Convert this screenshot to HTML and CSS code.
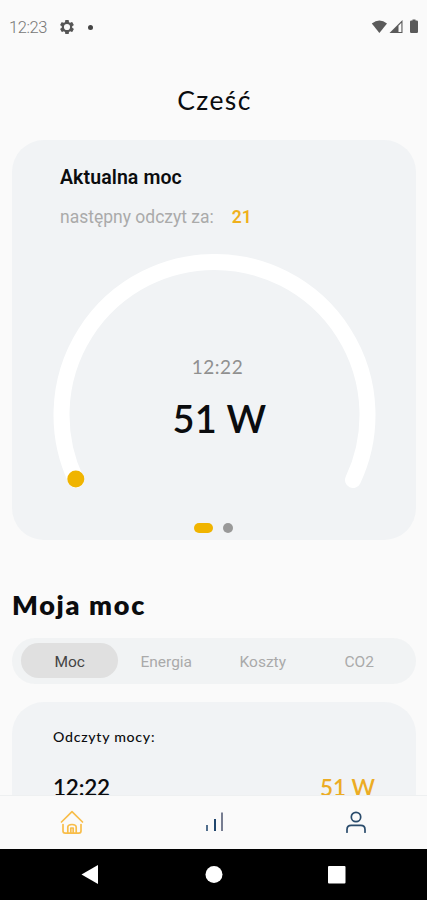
FILE: index.html
```html
<!DOCTYPE html>
<html lang="pl">
<head>
<meta charset="utf-8">
<meta name="viewport" content="width=device-width, initial-scale=1">
<title>Moja moc</title>
<link rel="stylesheet" href="styles.css">
</head>
<body>
<div class="screen">
  <header class="status">
    <span class="clock">12:23</span>
    <svg class="gear" width="14" height="14" viewBox="2 2 20 20"><path fill="#555" fill-rule="evenodd" d="M19.4 13a7.500 7.500 0 0 0 0-2l2.100-1.650a.5.5 0 0 0 .12-.64l-2-3.460a.5.5 0 0 0-.61-.22l-2.490 1a7.300 7.300 0 0 0-1.690-.98l-.38-2.650A.5.5 0 0 0 14 2h-4a.5.5 0 0 0-.49.420l-.38 2.650c-.61.250-1.170.590-1.690.980l-2.490-1a.5.5 0 0 0-.61.220l-2 3.460a.5.5 0 0 0 .12.640L4.570 11a7.900 7.900 0 0 0 0 2l-2.110 1.650a.5.5 0 0 0-.12.640l2 3.460c.12.220.39.300.61.220l2.490-1c.52.400 1.080.730 1.690.980l.38 2.650c.03.240.24.420.49.420h4c.25 0 .46-.18.490-.42l.38-2.650c.61-.25 1.170-.59 1.690-.98l2.490 1c.23.090.49 0 .61-.22l2-3.460a.5.5 0 0 0-.12-.64zM12 16.400a4.400 4.400 0 1 1 0-8.800 4.400 4.400 0 0 1 0 8.800z"/></svg>
    <span class="dot"></span>
    <svg class="signals" width="50" height="16" viewBox="0 0 50 16" fill="#5a5a5a"><path d="M.8 4.500Q8.500-1.300 16 4.500L8.400 14z"/><path d="M18.500 14 31.500 1v13z"/><path fill="#fafafa" d="M27.500 6.700 30.400 3.800v9.100h-2.900z"/><path d="M41.500 1.500V.5h3v1h1.300q1.200 0 1.200 1.200v10.100q0 1.200-1.200 1.200h-5.600q-1.200 0-1.200-1.200V2.700q0-1.200 1.200-1.200z"/></svg>
  </header>
  <h1 class="greeting">Cześć</h1>
  <main class="content">
    <section class="card power">
      <h2 class="card-title">Aktualna moc</h2>
      <p class="next">następny odczyt za: <b>21</b></p>
      <div class="gauge">
        <svg class="arc" width="324" height="250" viewBox="0 0 324 250"><path d="M23 226A153 153 0 1 1 300 226" fill="none" stroke="#fff" stroke-width="16" stroke-linecap="round"/><circle cx="22.800" cy="225" r="8.500" fill="#f0b400"/></svg>
        <div class="reading"><span class="reading-time">12:22</span><strong class="reading-value">51 W</strong></div>
      </div>
      <div class="pager"><i class="page active"></i><i class="page"></i></div>
    </section>
    <h2 class="section-title">Moja moc</h2>
    <nav class="tabs"><span class="tab selected">Moc</span><span class="tab">Energia</span><span class="tab">Koszty</span><span class="tab">CO2</span></nav>
    <section class="card history">
      <p class="history-title">Odczyty mocy:</p>
      <div class="row"><span class="row-time">12:22</span><span class="row-value">51 W</span></div>
    </section>
  </main>
  <nav class="bottom">
    <span><svg width="24" height="26" viewBox="0 0 24 26" fill="none" stroke="#f8bd49" stroke-width="1.700" stroke-linecap="round" stroke-linejoin="round"><path d="M1.500 12 12 1.700 22.500 12M3 14.500V21q0 2.200 2.200 2.200h13.600Q21 23.200 21 21v-6.500M7.800 22.500v-5.200q0-2.800 4.200-2.800t4.200 2.800v5.200M10.800 22.500V18h2.400v4.500"/></svg></span>
    <span><svg width="24" height="26" viewBox="0 0 24 26" fill="none" stroke-width="2"><path stroke="#526f8d" d="M5 15v6"/><path stroke="#20466d" d="M13 9v12"/><path stroke="#777d91" d="M20 2.500V21"/></svg></span>
    <span><svg width="24" height="26" viewBox="0 0 24 26" fill="none" stroke="#294b6b" stroke-width="1.700" stroke-linecap="round"><circle cx="12" cy="7" r="4.700"/><path d="M3 22.200v-2.700q0-4.200 4.200-4.200h9.600q4.200 0 4.200 4.200v2.700"/></svg></span>
  </nav>
  <footer class="system">
    <svg width="427" height="51" viewBox="0 0 427 51" fill="#fff"><path d="M81.500 25.500 98 16v19z"/><circle cx="214" cy="25.500" r="8.500"/><rect x="328" y="17" width="17.500" height="17.500" rx="1"/></svg>
  </footer>
</div>
</body>
</html>
```
FILE: styles.css
```css
* { box-sizing: border-box; }
body { margin: 0; background: #fafafa; font-family: Roboto, sans-serif; color: #0b0c0e; }
h1, h2, p { margin: 0; }
svg { display: block; }
.screen { height: 900px; display: flex; flex-direction: column; overflow: hidden; }
.status { height: 54px; flex: none; display: flex; align-items: center; padding: 0 6px 0 9px; }
.clock { font-size: 16.5px; line-height: 20px; color: #777; font-weight: 300; letter-spacing: -.4px; width: 51px; padding-top: 2px; }
.dot { width: 5px; height: 5px; border-radius: 50%; background: #444; margin-left: 14px; }
.signals { margin-left: auto; }
.greeting { height: 86px; flex: none; font: 400 26.500px/36px Lato, sans-serif; padding: 28px 0 0 2px; text-align: center; letter-spacing: 1.4px; }
.content { flex: 1; min-height: 0; overflow: hidden; padding: 0 11px 0 12px; }
.card { background: #f1f3f5; border-radius: 32px; }
.power { height: 400px; padding: 26px 41px 0; display: flex; flex-direction: column; }
.card-title { font-size: 19.500px; line-height: 24px; font-weight: 600; padding-left: 7px; letter-spacing: .1px; }
.next { font-size: 17.500px; line-height: 24px; padding-left: 7px; margin-top: 15px; color: #aaa; display: flex; gap: 18px; }
.next b { color: #efb01c; font-weight: 600; }
.gauge { display: grid; margin-top: 25px; height: 250px; }
.arc, .reading { grid-area: 1 / 1; }
.reading { display: flex; flex-direction: column; align-items: center; padding: 100px 0 0 5px; }
.reading-time { font: 400 19px/26px Lato, sans-serif; color: #909090; letter-spacing: .5px; }
.reading-value { font: 600 38px/48px Lato, sans-serif; margin: 14px 0 0 4px; letter-spacing: .3px; }
.pager { display: flex; justify-content: center; align-items: center; gap: 10px; margin-top: 19px; padding-right: 1px; }
.page { width: 10px; height: 10px; border-radius: 5px; background: #999; }
.page.active { width: 19px; background: #f0b400; }
.section-title { font: 800 27px/36px Lato, sans-serif; margin-top: 47px; letter-spacing: 1.7px; }
.tabs { height: 46px; margin-top: 15px; border-radius: 23px; background: #f1f3f4; padding: 5px 9px 6px; display: grid; grid-template-columns: repeat(4, 1fr); }
.tab { display: flex; align-items: center; justify-content: center; border-radius: 18px; font-size: 15.500px; color: #aaa; padding: 2px 0 0 1px; }
.tab.selected { background: #e0e0e0; color: #444; }
.history { margin-top: 18px; height: 160px; padding: 25px 41px 0 41px; }
.history-title { font: 500 14.200px/20px Lato, sans-serif; letter-spacing: .7px; }
.row { display: flex; justify-content: space-between; margin-top: 26px; font: 600 22.500px/30px Lato, sans-serif; letter-spacing: -.2px; }
.row-value { color: #ecac24; letter-spacing: 0; }
.bottom { height: 54px; flex: none; border-top: 1px solid #eef0f1; background: #fafafa; display: grid; grid-template-columns: repeat(3, 1fr); justify-items: center; align-items: center; padding-left: 1px; }
.system { height: 51px; flex: none; background: #000; }
```
